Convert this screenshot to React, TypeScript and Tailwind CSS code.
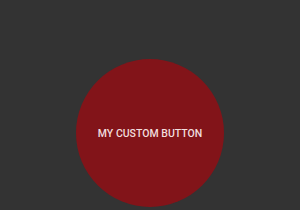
export default function App() {
  return (
    <div className="w-[300px] h-[210px] bg-[#333333] flex justify-center pt-[59px] overflow-hidden">
      <button className="w-[148px] h-[148px] shrink-0 rounded-full bg-[#821419] flex items-center justify-center pt-[2px] text-[#f1dede] text-[10.5px] font-medium font-['Roboto',sans-serif]">
        MY CUSTOM BUTTON
      </button>
    </div>
  );
}
